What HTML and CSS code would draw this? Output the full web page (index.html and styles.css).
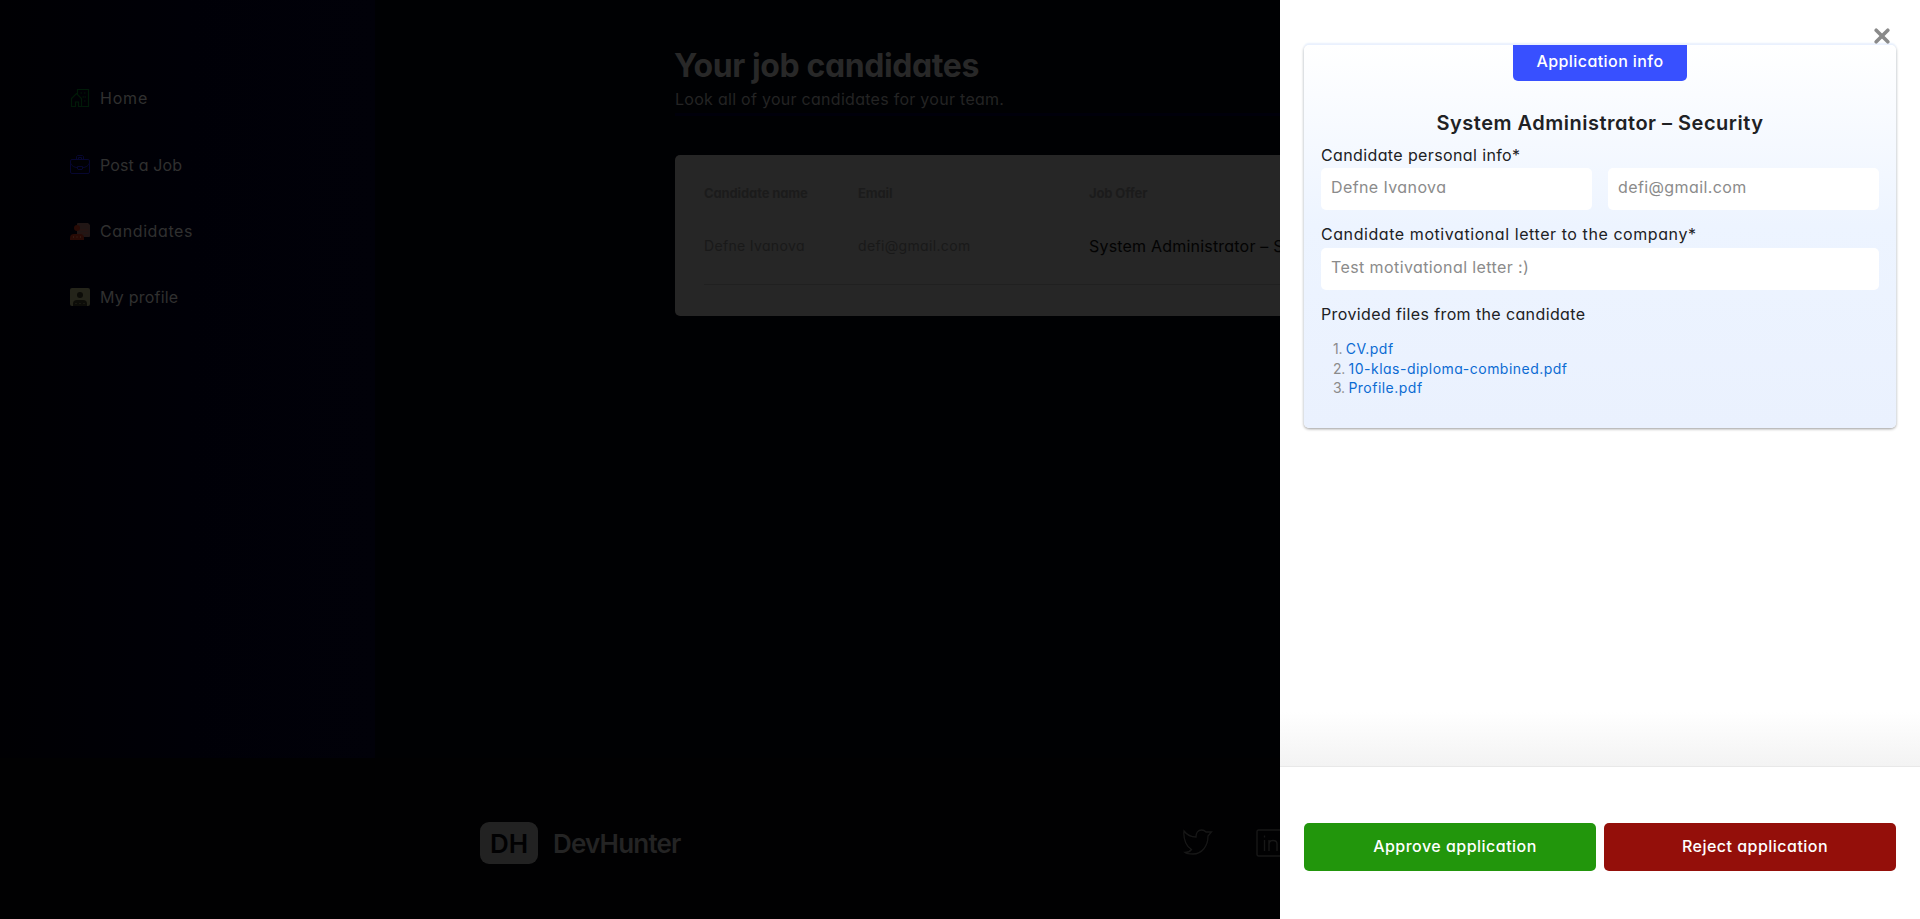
FILE: index.html
```html
<!DOCTYPE html>
<html lang="en">
<head>
<meta charset="utf-8">
<title>DevHunter</title>
<link rel="stylesheet" href="styles.css">
</head>
<body>
<div class="page">
  <div class="main">
    <nav class="sidebar">
      <a class="nav-item home"><svg class="nav-icon" viewBox="0 0 20 20" fill="none" stroke="#001a08" stroke-width="1.2"><path d="M7.500 7V1.500h11v17H12"/><path d="M1.500 18.500v-8l5-5 5 5v8H8.500V14h-3v4.500z"/><path d="M10.500 5H12M14 5h1.500M12.500 9H14M14.500 9H16M14 13h1.500"/></svg>Home</a>
      <a class="nav-item post"><svg class="nav-icon" viewBox="0 0 20 20" fill="none" stroke="#060630" stroke-width="1"><rect x=".5" y="4.500" width="19" height="14" rx="1.500"/><path d="M6.500 4.500V1.500l1-1h5l1 1v3M8.500 4V2.500h3V4M.5 8c1 3 4 4.500 6.500 4.500M19.500 8c-1 3-4 4.500-6.500 4.500M7.500 11.500h5v2.500l-.5.5H8l-.5-.5z"/></svg>Post a Job</a>
      <a class="nav-item candidates"><svg class="nav-icon" viewBox="0 0 20 20"><path d="M8 2h10l2 2v11q0 1-1 1H8q-1 0-1-1V3q0-1 1-1z" fill="#211615"/><path d="M10 9h8M10 12h8" stroke="#2b1513"/><circle cx="7" cy="7" r="3" fill="#280a05"/><path d="M0 19v-2q0-4 4-4h6q4 0 4 4v2z" fill="#280a05"/><path d="M3 16h1M6.500 16h1M10 16h1" stroke="#3a2a20"/></svg>Candidates</a>
      <a class="nav-item"><svg class="nav-icon" viewBox="0 0 20 20"><rect y="1" width="20" height="18" rx="2" fill="#24241a"/><circle cx="10" cy="8" r="3" fill="#0c0c08"/><path d="M3 19v-2q0-4 4-4h6q4 0 4 4v2z" fill="#0c0c08"/><path d="M5.500 16.500h1M9.500 16.500h1M13.500 16.500h1" stroke="#24241a"/></svg>My profile</a>
    </nav>
    <section class="content">
      <h1 class="title">Your job candidates</h1>
      <p class="subtitle">Look all of your candidates for your team.</p>
      <div class="rule"></div>
      <div class="table">
        <div class="row head"><span>Candidate name</span><span>Email</span><span>Job Offer</span></div>
        <div class="row"><span>Defne Ivanova</span><span>defi@gmail.com</span><span class="offer">System Administrator – Security</span></div>
      </div>
    </section>
  </div>
  <footer class="footer">
    <div class="logo">DH</div>
    <div class="brand">DevHunter</div>
    <svg class="social twitter" viewBox="0 0 30 28" fill="none" stroke="#171717" stroke-width="1.300"><path d="M1 2c3 4 7 6 12 6 0-4 2-7 5.500-7 2 0 3.500.8 4.500 2h5.500l-3.500 4c0 10-6 18-15 18-3 0-6 0-8-1.500 3 0 5-1 6.500-3C4 18 0 11 1 2z"/></svg>
    <svg class="social" viewBox="0 0 28 28" fill="none" stroke="#171717" stroke-width="1.400"><rect x="1" y="1" width="26" height="26" rx="1.500"/><path d="M8.500 11v11M8.500 6.500v2M13 22V11M13 15q0-3.500 4-3.500t4 3.500v7"/></svg>
  </footer>
</div>
<aside class="drawer">
  <div class="drawer-body">
    <div class="card">
      <div class="badge">Application info</div>
      <h2 class="job">System Administrator – Security</h2>
      <p class="label">Candidate personal info*</p>
      <div class="fields"><div class="field">Defne Ivanova</div><div class="field">defi@gmail.com</div></div>
      <p class="label second">Candidate motivational letter to the company*</p>
      <div class="field letter">Test motivational letter :)</div>
      <p class="label third">Provided files from the candidate</p>
      <div class="files">
        <div>1. <a>CV.pdf</a></div>
        <div>2. <a>10-klas-diploma-combined.pdf</a></div>
        <div>3. <a>Profile.pdf</a></div>
      </div>
    </div>
    <svg class="close" viewBox="0 0 16 16" stroke="#8a8a8a" stroke-width="3.600" stroke-linecap="round"><path d="M2.200 2.200l11.600 11.600M13.800 2.200L2.200 13.800"/></svg>
  </div>
  <div class="actions">
    <button class="btn approve">Approve application</button>
    <button class="btn reject">Reject application</button>
  </div>
</aside>
</body>
</html>
```
FILE: styles.css
```css
* { box-sizing: border-box; }
body { margin: 0; height: 919px; overflow: hidden; background: #000103; font-family: Inter, "Liberation Sans", sans-serif; font-feature-settings: "cv11"; white-space: nowrap; }
h1, h2, p { margin: 0; }
.page { display: flex; flex-direction: column; height: 919px; }
.main { display: flex; height: 758px; }
.sidebar { width: 375px; padding: 65px 0 0 70px; background: linear-gradient(90deg, #000003, #000007 50%, #010109); }
.nav-item { display: flex; align-items: center; gap: 10px; height: 66.300px; color: #303030; font-size: 16px; letter-spacing: .22px; }
.nav-item.home { letter-spacing: .8px; }
.nav-item.post { padding-top: 1px; letter-spacing: .15px; }
.nav-item.candidates { letter-spacing: .6px; }
.nav-icon { width: 20px; height: 20px; }
.content { padding: 46px 0 0 300px; width: 1545px; }
.title { margin-left: -1px; color: #282828; font-size: 32px; line-height: 39px; font-weight: 700; letter-spacing: -.4px; }
.subtitle { color: #242424; font-size: 16px; line-height: 28px; letter-spacing: .28px; }
.rule { height: 3px; background: #00000b; }
.table { margin-top: 39px; height: 161px; padding: 10px 30px 10px 29px; border-radius: 5px; background: #262626; }
.row { display: grid; grid-template-columns: 154px 231px 1fr; height: 65px; padding-bottom: 13px; align-items: center; color: #191919; font-size: 14px; letter-spacing: .34px; border-bottom: 1px solid #202020; }
.row.head { height: 55px; padding: 0; border: 0; font-size: 13px; font-weight: 700; letter-spacing: -.12px; color: #1b1b1b; }
.row .offer { font-size: 16px; letter-spacing: .2px; color: #030303; }
.footer { display: flex; align-items: center; height: 161px; padding: 9px 0 0 480px; background: #010102; }
.logo { width: 58px; height: 42px; border-radius: 9px; background: #222; color: #010102; font-size: 26px; font-weight: 600; line-height: 44px; text-align: center; }
.brand { width: 630px; margin-left: 15px; padding-top: 1px; color: #242424; font-size: 26px; font-weight: 600; letter-spacing: -.8px; }
.social { width: 28px; height: 28px; }
.twitter { width: 30px; margin-right: 43px; }
.brand + .twitter { margin-left: 0; }
.drawer { position: absolute; left: 1280px; top: 0; width: 640px; height: 919px; background: #fff; }
.drawer-body { height: 767px; padding: 45px 24px 0; border-bottom: 1px solid #e8e8e8; background: linear-gradient(#fff 712px, #f3f3f3 766px); }
.card { height: 383px; padding: 0 17px; border-radius: 5px; background: linear-gradient(#fff, #edf4ff 180px, #eaf1fe); box-shadow: 0 -2px 2px #e9f1fe, 0 1px 3px rgba(0,0,0,.4); color: #202124; font-size: 16px; letter-spacing: .38px; }
.badge { width: 174px; height: 36px; margin: 0 auto; padding-top: 6px; border-radius: 0 0 5px 5px; background: #3850ff; color: #fff; line-height: 20px; text-align: center; font-weight: 500; letter-spacing: .42px; }
.job { margin-top: 29px; font-size: 20px; line-height: 26px; font-weight: 600; letter-spacing: .5px; text-align: center; }
.label { margin-top: 7px; line-height: 24px; }
.fields { display: flex; gap: 16px; margin-top: 1px; }
.field { flex: 1; height: 42px; padding-left: 10px; border-radius: 5px; background: #fff; color: #8b8b8b; line-height: 39px; letter-spacing: .4px; }
.second { margin-top: 12px; letter-spacing: .57px; }
.letter { margin-top: 2px; }
.third { margin-top: 12px; }
.files { margin: 13px 0 0 12px; color: #8b8b8b; font-size: 14px; line-height: 19.500px; letter-spacing: -.3px; }
.files a { color: #0b6bd3; letter-spacing: .48px; }
.close { position: absolute; right: 30px; top: 28px; width: 16px; height: 16px; }
.actions { display: flex; gap: 8px; padding: 56px 24px 0; }
.btn { flex: 1; height: 48px; padding: 0 0 2px 10px; border: 0; border-radius: 5px; color: #fff; font: 500 16px Inter, sans-serif; font-feature-settings: "cv11"; letter-spacing: .48px; }
.approve { background: #22960c; }
.reject { background: #940f0a; }
```
